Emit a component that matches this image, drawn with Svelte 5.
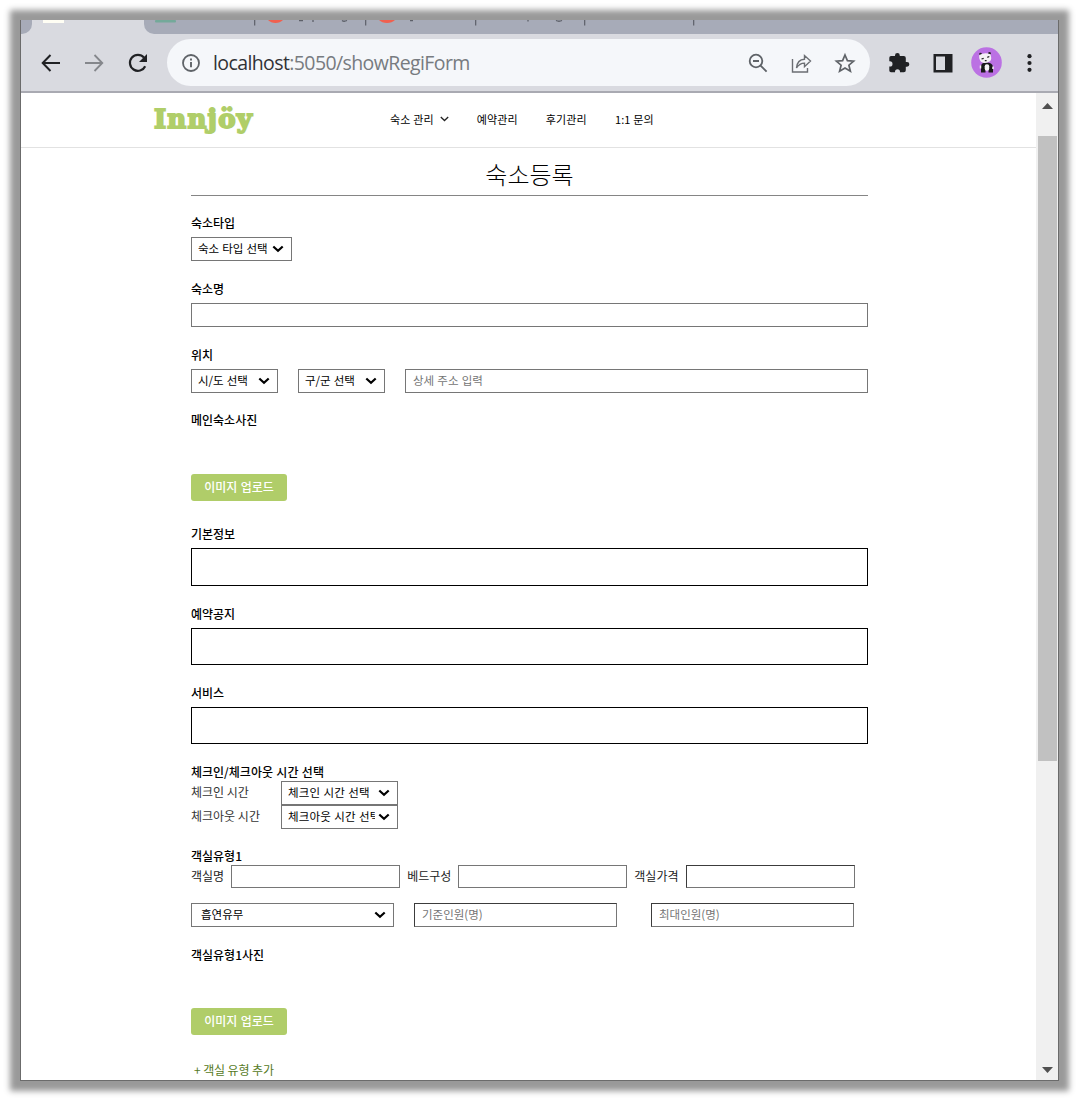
<script>
  const nav = ['예약관리', '후기관리', '1:1 문의'];
  const separators = [254, 365, 475, 584, 693];
</script>

{#snippet chevron()}
  <svg class="chev" width="12" height="8" viewBox="0 0 12 8"><path d="M1.300 1.500 6 5.800 10.700 1.500" fill="none" stroke="#000" stroke-width="2.200" /></svg>
{/snippet}

{#snippet select(text, kind)}
  <div class="field select {kind}"><span class="value">{text}</span>{@render chevron()}</div>
{/snippet}

<div class="window">
  <div class="tabs">
    <div class="tab-prev"></div>
    <div class="tab-active"><i class="fav"></i></div>
    <div class="tab-rest"></div>
    <svg class="bits" width="1037" height="14" viewBox="21 20 1037 14">
      <rect x="155" y="20" width="21" height="2.500" rx="1" fill="#74a99a" />
      <path d="M268 20h15q-3 3-7.500 3t-7.500-3zM379 20h16q-3 3-8 3t-8-3z" fill="#f0604f" />
      {#each separators as x}<rect {x} y="20" width="1.300" height="5.500" fill="#62656f" />{/each}
      <path d="M299 20.500h4M313 20v2M342 20.500q2 1.500 5 0M410 20.500h3M528 20v1.500M556 20.500q3 1.500 6 0" fill="none" stroke="#5d6069" stroke-width="1.300" />
    </svg>
  </div>

  <div class="toolbar">
    <div class="cell"><svg width="24" height="24" viewBox="0 0 24 24"><path d="M21 12H4M11.500 4 3.700 12l7.800 8" fill="none" stroke="#202124" stroke-width="2" /></svg></div>
    <div class="cell"><svg width="24" height="24" viewBox="0 0 24 24"><path d="M3 12h17M12.500 4l7.800 8-7.800 8" fill="none" stroke="#85878c" stroke-width="1.800" /></svg></div>
    <div class="cell"><svg width="24" height="24" viewBox="0 0 24 24"><path d="M19.200 15.200A8 8 0 1 1 18 6.600" fill="none" stroke="#202124" stroke-width="2.200" /><path d="M21 3v8h-8z" fill="#202124" /></svg></div>
    <div class="pill">
      <svg class="info" width="20" height="20" viewBox="0 0 20 20"><circle cx="10" cy="10" r="8" fill="none" stroke="#5f6368" stroke-width="1.800" /><path d="M10 9v5.200M10 5.600v1.900" stroke="#5f6368" stroke-width="1.900" /></svg>
      <div class="url"><b>localhost</b>:5050/showRegiForm</div>
      <div class="cell"><svg width="24" height="24" viewBox="0 0 24 24"><circle cx="10" cy="10" r="6.300" fill="none" stroke="#5f6368" stroke-width="1.800" /><path d="M7 10h6M14.600 14.600l6 6" stroke="#5f6368" stroke-width="1.900" /></svg></div>
      <div class="cell"><svg width="24" height="24" viewBox="0 0 24 24"><path d="M2.500 8v13h15v-4M6.500 17c.4-5 3-8.600 8-8.800V4.500l6 5.600-6 5.600v-3.600c-3.800 0-6 1.600-8 4.900z" fill="none" stroke="#6b6e73" stroke-width="1.400" /></svg></div>
      <div class="cell"><svg width="24" height="24" viewBox="0 0 24 24"><path d="m12 4 2.400 5.700 6.200.5-4.700 4 1.500 6.100-5.400-3.300-5.400 3.300 1.500-6.100-4.700-4 6.200-.5z" fill="none" stroke="#5f6368" stroke-width="1.700" /></svg></div>
    </div>
    <div class="cell first"><svg width="24" height="24" viewBox="0 0 24 24"><path d="M20 11h-1.200V7a2 2 0 0 0-2-2h-4V4.500a2.400 2.400 0 0 0-4.800 0V5H4a1.700 1.700 0 0 0-1.700 1.700v3.600h.6a2.600 2.600 0 0 1 0 5.200h-.6v4A1.700 1.700 0 0 0 4 21.200h4v-.5a2.500 2.500 0 0 1 5 0v.5h3.800a2 2 0 0 0 2-2v-3.500H20a2.350 2.350 0 0 0 0-4.700z" fill="#202124" /></svg></div>
    <div class="cell"><svg width="24" height="24" viewBox="0 0 24 24"><path d="M2.500 3h19v18.500h-19zM5 5.500v13.500h9v-13.500z" fill="#202124" fill-rule="evenodd" /></svg></div>
    <div class="cell">
      <svg width="31" height="31" viewBox="0 0 31 31">
        <circle cx="15.500" cy="15.500" r="15.300" fill="#bb71e3" />
        <circle cx="9.500" cy="7" r="1.300" fill="#222" /><circle cx="18.500" cy="6.300" r="1.300" fill="#222" />
        <path d="M10 25.500v-6q0-4 5.500-4t6.500 4v6h-4.500v-3h-3v3z" fill="#191919" />
        <path d="M8.300 8q5.500-3 11-.8 2 4.500-.3 7-4.500 3-8.700.8Q7.500 12 8.300 8z" fill="#f5f2f5" />
        <path d="m10.500 12 2.200-.7M16.300 10.300l2-.8M13.800 13.600h1.800" stroke="#222" stroke-width="1.300" />
        <rect x="13.700" y="17.300" width="4.500" height="6.500" rx="2" fill="#f5f2f5" />
        <path d="M9.500 18.500v3M22 19.500v2.500" stroke="#f5f2f5" stroke-width="1.500" />
      </svg>
    </div>
    <div class="cell"><svg width="24" height="24" viewBox="0 0 24 24" fill="#202124"><circle cx="11.500" cy="5.200" r="2.100" /><circle cx="11.500" cy="12" r="2.100" /><circle cx="11.500" cy="18.800" r="2.100" /></svg></div>
  </div>

  <div class="body">
    <div class="page">
      <header>
        <div class="logo">Innjöy</div>
        <nav>
          <span class="drop">숙소 관리 <svg width="9" height="6" viewBox="0 0 9 6"><path d="m.8 1 3.700 3.500L8.200 1" fill="none" stroke="#222" stroke-width="1.300" /></svg></span>
          {#each nav as item}<span>{item}</span>{/each}
        </nav>
      </header>

      <main>
        <h1>숙소등록</h1>

        <h2 class="g19">숙소타입</h2>
        {@render select('숙소 타입 선택', 'type')}

        <h2>숙소명</h2>
        <div class="field"></div>

        <h2>위치</h2>
        <div class="row location">
          {@render select('시/도 선택', '')}
          {@render select('구/군 선택', '')}
          <div class="field hint">상세 주소 입력</div>
        </div>

        <h2 class="g19 alone">메인숙소사진</h2>
        <div class="upload">이미지 업로드</div>

        <h2 class="g25">기본정보</h2>
        <div class="area tall"></div>
        <h2>예약공지</h2>
        <div class="area"></div>
        <h2>서비스</h2>
        <div class="area"></div>

        <h2 class="tight wide">체크인/체크아웃 시간 선택</h2>
        <div class="row time"><span>체크인 시간</span>{@render select('체크인 시간 선택', '')}</div>
        <div class="row time"><span>체크아웃 시간</span>{@render select('체크아웃 시간 선택', '')}</div>

        <h2 class="g19 tight">객실유형1</h2>
        <div class="row room">
          <span>객실명</span><div class="field"></div>
          <span>베드구성</span><div class="field"></div>
          <span>객실가격</span><div class="field dark"></div>
        </div>
        <div class="row people">
          {@render select('흡연유무', 'smoke')}
          <div class="field hint dark">기준인원(명)</div>
          <div class="field hint dark">최대인원(명)</div>
        </div>

        <h2 class="alone last">객실유형1사진</h2>
        <div class="upload">이미지 업로드</div>
        <div class="add">+ 객실 유형 추가</div>
      </main>
    </div>
    <div class="scrollbar">
      <svg width="11" height="6" viewBox="0 0 11 6"><path d="M0 6 5.500 0 11 6z" fill="#505050" /></svg>
      <div class="thumb"></div>
      <svg class="down" width="11" height="6" viewBox="0 0 11 6"><path d="M0 0h11L5.500 6z" fill="#505050" /></svg>
    </div>
  </div>
</div>

<style>
  :global(body) { box-sizing: border-box; margin: 0; height: 1101px; padding: 20px 0 0 20px; background: #fff; }
  * { box-sizing: border-box; }
  svg { display: block; flex: none; }
  .window {
    width: 1039px; height: 1061px;
    border: 1px solid #6b6b6b; border-top: 0; background: #fff;
    box-shadow: 0 0 6px 10px #999;
    font-family: 'Noto Sans CJK KR', sans-serif; font-size: 12px; color: #000;
    display: flex; flex-direction: column;
  }
  .tabs { height: 14px; flex: none; display: flex; background: #d9dae0; position: relative; }
  .tab-prev { width: 11px; background: #a7abb8; border-bottom-right-radius: 10px; }
  .tab-active { width: 112px; padding-left: 11px; }
  .fav { display: block; width: 21px; height: 2.5px; background: #fffef4; }
  .tab-rest { flex: 1; background: #a7abb8; border-bottom-left-radius: 10px; }
  .bits { position: absolute; left: 0; top: 0; }
  .toolbar {
    height: 59px; flex: none; display: flex; align-items: center; background: #d9dae0;
    padding: 0 0 0 8px; border-bottom: 2px solid #a9aab2;
  }
  .cell { width: 43.5px; flex: none; display: flex; justify-content: center; }
  .pill { width: 703px; height: 47px; margin-left: 7.5px; padding: 0 3px 0 14px; border-radius: 24px; background: #f5f7fa; display: flex; align-items: center; }
  .url { flex: 1; margin-left: 12px; padding-top: 1px; font: 19.5px/28px 'Open Sans', sans-serif; letter-spacing: -.6px; color: #777b80; white-space: nowrap; }
  .url b { font-weight: 400; color: #303236; }
  .first { margin-left: 7.5px; }
  .body { flex: 1; display: flex; min-height: 0; }
  .page { flex: 1; overflow: hidden; }
  header { height: 55px; border-bottom: 1px solid #e2e2e2; display: flex; align-items: center; padding: 0 0 2px 133px; }
  .logo { width: 236px; font: 700 26px/34px 'DejaVu Serif', serif; letter-spacing: 1.2px; color: #b0ce69; -webkit-text-stroke: 1.9px #b0ce69; }
  nav { display: flex; gap: 28px; font-size: 11px; letter-spacing: .15px; white-space: nowrap; }
  .drop { display: flex; align-items: center; gap: 6px; }
  main { width: 677px; margin-left: 170px; }
  h1 { margin: 0; height: 48px; line-height: 52px; font-size: 24px; font-weight: 300; text-align: center; border-bottom: 1px solid #858585; }
  h2 { margin: 20px 0 6px; height: 16px; font-size: 12px; line-height: 16px; font-weight: 500; white-space: nowrap; }
  h2.g19 { margin-top: 19px; }
  h2.g25 { margin-top: 25px; }
  h2.tight { margin-bottom: 1px; }
  h2.wide { word-spacing: .7px; }
  h2.alone { margin-bottom: 46px; }
  h2.last { margin-bottom: 45px; }
  .row { display: flex; white-space: nowrap; }
  .field { height: 24px; border: 1px solid #767676; line-height: 22px; white-space: nowrap; overflow: hidden; }
  .dark { border-top-color: #3c3c3c; border-left-color: #3c3c3c; }
  .select { display: flex; align-items: center; padding: 0 7px 0 6px; font-size: 11.5px; }
  .value { flex: 1; overflow: hidden; line-height: 20px; margin-top: -2px; word-spacing: .5px; }
  .type { width: 101px; }
  .hint { padding-left: 7px; color: #757575; font-size: 11.5px; line-height: 20px; word-spacing: .6px; }
  .location { gap: 20px; }
  .location .select { width: 87px; }
  .location .hint { flex: 1; }
  .upload { width: 96px; height: 27px; border-radius: 3px; background: #b0cd69; color: #fff; line-height: 26px; text-align: center; font-weight: 500; word-spacing: .8px; }
  .area { height: 37px; border: 1px solid #000; }
  .tall { height: 38px; }
  .time span:first-child { width: 90px; line-height: 22px; color: #333; }
  .time .select { width: 117px; }
  .time .select > .value { flex: none; width: 87px; margin-right: 3px; line-height: 20px; letter-spacing: .18px; color: #000; }
  .room { line-height: 22px; }
  .room span { color: #222; margin-right: 7px; }
  .room .field { width: 169px; height: 23px; margin-right: 7px; }
  .room .field:last-child { margin: 0 0 0 1px; }
  .people { margin-top: 15px; }
  .people .field { width: 203px; margin-right: 20px; }
  .people .field:last-child { margin: 0 0 0 14px; }
  .smoke { padding-left: 9px; }
  .add { margin: 27px 0 0 3px; line-height: 16px; letter-spacing: -.1px; color: #557a1e; }
  .scrollbar { width: 22px; background: #f0f0f0; display: flex; flex-direction: column; align-items: center; padding-top: 10px; }
  .thumb { width: 19px; height: 625px; margin-top: 27px; background: #c1c1c1; }
  .down { margin-top: 306px; }
</style>
